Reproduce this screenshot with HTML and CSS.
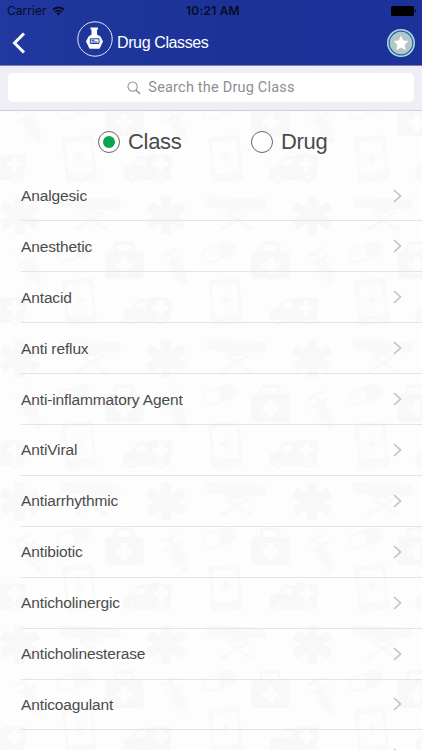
FILE: index.html
```
<!DOCTYPE html>
<html lang="en">
<head>
<meta charset="utf-8">
<title>Drug Classes</title>
<link rel="stylesheet" href="styles.css">
</head>
<body>
<div class="screen">
  <header class="header">
    <div class="status">
      <div class="carrier"><span>Carrier</span>
        <svg width="13" height="10" viewBox="0 0 14 10"><g fill="none" stroke="#070b25" stroke-width="1.9"><path d="M1 3.6Q7-1.2 13 3.6"/><path d="M3.3 6Q7 3 10.7 6"/></g><path d="M4.8 7.4Q7 5.8 9.2 7.4L7 9.8Z" fill="#070b25"/></svg>
      </div>
      <div class="time">10:21 AM</div>
      <svg class="battery" width="26" height="10" viewBox="0 0 26 10"><rect width="23" height="10" rx="1.6"/><path d="M24 3q2 2 0 4z"/></svg>
    </div>
    <div class="nav">
      <svg class="back" width="14" height="22" viewBox="0 0 14 22"><path d="M12 1.5L2.5 11L12 20.5" fill="none" stroke="#fff" stroke-width="3"/></svg>
      <svg class="logo" width="36" height="36" viewBox="0 0 36 36"><circle cx="18" cy="18" r="17.2" fill="none" stroke="#e4e8f8" stroke-width="1"/><path d="M13.5 6.500h7.500v2h-1v5l3.500 2l2.500 5l-3.500 7.200h-10l-3.500-7.200l2.500-5l3-2V8.500h-1z" fill="#fff"/><path d="M13.300 17.800h8.700v4.700h-8.700zM14.500 19.300h3M14.500 21h6" fill="none" stroke="#2038a0" stroke-width="1"/></svg>
      <h1>Drug Classes</h1>
      <svg class="star" width="28" height="28" viewBox="0 0 28 28"><circle cx="14" cy="14" r="13.2" fill="#2f6297" stroke="#a9d8e1" stroke-width="1.6"/><circle cx="14" cy="14" r="10.8" fill="#b9c5c5" stroke="#a5d3dc" stroke-width="1"/><path d="M14 7.400l2.100 4.300l4.700.7l-3.400 3.300l.8 4.700l-4.200-2.200l-4.200 2.200l.8-4.700l-3.400-3.300l4.700-.7z" fill="#fff" stroke="#fff" stroke-width=".7"/></svg>
    </div>
  </header>
  <div class="searchbar">
    <div class="field">
      <svg width="14" height="14" viewBox="0 0 15 15" fill="none" stroke="#8e8e93"><circle cx="6" cy="6" r="5" stroke-width="1.1"/><path d="M9.6 9.6L14 14" stroke-width="1.5"/></svg>
      <span>Search the Drug Class</span>
    </div>
  </div>
  <main class="content">
    <svg class="wallpaper" width="422" height="640" viewBox="0 110 422 640">
      <defs>
        <pattern id="medical" patternUnits="userSpaceOnUse" x="47" y="190" width="146.2" height="143">
          <g transform="translate(-47 -190)" fill="#f9f9f9">
            <path d="M60.500 196L120 199v10l-23 1v3h-13l-3-4l-20-2z"/>
            <path d="M80 212L104 229M103 212L77 229" stroke="#f9f9f9" stroke-width="3"/><circle cx="77" cy="228" r="2.500"/><circle cx="105" cy="228" r="2.500"/>
            <path d="M166 196.500v38M148 206l36 19M184 206l-36 19" stroke="#f8f8f8" stroke-width="10"/>
            <g transform="rotate(-18 73 252)"><rect x="56.500" y="245" width="33" height="14" rx="7" fill="none" stroke="#f9f9f9" stroke-width="2"/><path d="M73 244h9a8 8 0 0 1 0 16h-9z"/></g>
            <path d="M115 252v-5q0-4 4-4h10q4 0 4 4v5" fill="none" stroke="#f8f8f8" stroke-width="3"/>
            <rect x="105" y="251" width="38.500" height="28" rx="4" fill="#f8f8f8"/><path d="M121.500 257h6v5.500h5.500v6h-5.500v5.500h-6v-5.500h-5.500v-6h5.500z" fill="#fdfdfd"/>
            <g transform="translate(177 268) rotate(-27)"><path d="M-6-9H6V12H-6zM-3 13h6v6h-6zM-1-16h3v6h-3zM-8-19H9v3H-8zM-10-10H10v3H-10z"/></g>
            <g transform="rotate(-5 79 302)"><path fill-rule="evenodd" d="M67 279h25q3 0 3 3v40q0 3-3 3H67q-3 0-3-3v-40q0-3 3-3zM67.500 284v32h24v-32z"/><path d="M78 295h3v4h4v3h-4v4h-3v-4h-4v-3h4z"/><circle cx="79.500" cy="320.500" r="1.600" fill="#fdfdfd"/></g>
            <path d="M123 321l1-11l8-2l6-9h12v-2l22 1l-2 25h-46z" fill="#f8f8f8"/><path d="M134 308l5-6h7v7z" fill="#fdfdfd"/><circle cx="132" cy="321" r="5" fill="#f8f8f8" stroke="#fdfdfd"/><circle cx="161" cy="321" r="5" fill="#f8f8f8" stroke="#fdfdfd"/><circle cx="132" cy="321" r="2.200" fill="#fdfdfd"/><circle cx="161" cy="321" r="2.200" fill="#fdfdfd"/><path d="M158 300h5v5h5v5h-5v5h-5v-5h-5v-5h5z" fill="#fdfdfd"/>
          </g>
        </pattern>
      </defs>
      <rect y="110" width="422" height="640" fill="url(#medical)"/>
    </svg>
    <div class="filters">
      <div class="choice"><span class="radio on"></span><span>Class</span></div>
      <div class="choice"><span class="radio"></span><span>Drug</span></div>
    </div>
    <ul class="list">
      <li><span>Analgesic</span><svg class="chev" viewBox="0 0 9 14"><path d="M1 1l6.500 6L1 13"/></svg></li>
      <li><span>Anesthetic</span><svg class="chev" viewBox="0 0 9 14"><path d="M1 1l6.500 6L1 13"/></svg></li>
      <li><span>Antacid</span><svg class="chev" viewBox="0 0 9 14"><path d="M1 1l6.500 6L1 13"/></svg></li>
      <li><span>Anti reflux</span><svg class="chev" viewBox="0 0 9 14"><path d="M1 1l6.500 6L1 13"/></svg></li>
      <li><span>Anti-inflammatory Agent</span><svg class="chev" viewBox="0 0 9 14"><path d="M1 1l6.500 6L1 13"/></svg></li>
      <li><span>AntiViral</span><svg class="chev" viewBox="0 0 9 14"><path d="M1 1l6.500 6L1 13"/></svg></li>
      <li><span>Antiarrhythmic</span><svg class="chev" viewBox="0 0 9 14"><path d="M1 1l6.500 6L1 13"/></svg></li>
      <li><span>Antibiotic</span><svg class="chev" viewBox="0 0 9 14"><path d="M1 1l6.500 6L1 13"/></svg></li>
      <li><span>Anticholinergic</span><svg class="chev" viewBox="0 0 9 14"><path d="M1 1l6.500 6L1 13"/></svg></li>
      <li><span>Anticholinesterase</span><svg class="chev" viewBox="0 0 9 14"><path d="M1 1l6.500 6L1 13"/></svg></li>
      <li><span>Anticoagulant</span><svg class="chev" viewBox="0 0 9 14"><path d="M1 1l6.500 6L1 13"/></svg></li>
      <li><span>Anticonvulsant</span><svg class="chev" viewBox="0 0 9 14"><path d="M1 1l6.500 6L1 13"/></svg></li>
    </ul>
  </main>
</div>
</body>
</html>
```
FILE: styles.css
```
* { box-sizing: border-box; }
body { margin: 0; font-family: "Liberation Sans", Arial, sans-serif; }
svg { display: block; flex: none; }
.screen { width: 422px; height: 750px; overflow: hidden; display: flex; flex-direction: column; background: #fdfdfd; }
.header { height: 66px; flex: none; background: linear-gradient(90deg, #20389f, #1c3298 55%, #1d319b); border-bottom: 1px solid #777fb4; }
.status { height: 22px; padding: 0 6px 0 7px; display: grid; grid-template-columns: 1fr auto 1fr; align-items: center; color: #070b25; font: 12px/22px Inter, sans-serif; }
.carrier { display: flex; align-items: center; gap: 5px; letter-spacing: .05px; }
.time { font-weight: 600; letter-spacing: .2px; margin-left: 3px; }
.battery { justify-self: end; margin-right: -1px; fill: #000; }
.nav { height: 42px; padding: 0 7px 0 12px; display: flex; align-items: center; }
.back { margin-right: 51px; }
.logo { margin-top: -8px; }
h1 { margin: 0 auto 0 4px; font-weight: 400; font-size: 16px; line-height: 20px; letter-spacing: -.38px; color: #fff; }
.searchbar { height: 45px; flex: none; padding: 7px 8px 0 8px; background: #efeef6; border-bottom: 1px solid #d0cfd7; }
.field { height: 29px; border-radius: 5px; background: #fff; display: flex; align-items: center; justify-content: center; gap: 7px; color: #8e8e93; font: 14.500px/29px Roboto, sans-serif; letter-spacing: .2px; }
.content { position: relative; flex: 1; min-height: 0; overflow: hidden; }
.wallpaper { position: absolute; left: 0; top: -1px; }
.filters { position: relative; height: 59.600px; padding: 3px 0 0 98px; display: flex; align-items: center; color: #4b4b4b; font-size: 22px; line-height: 26px; letter-spacing: -.3px; }
.choice { display: flex; align-items: center; gap: 8px; width: 153px; }
.radio { width: 22px; height: 22px; border: 1px solid #666; border-radius: 50%; display: grid; place-items: center; background: #fff; }
.on::after { content: ""; width: 12px; height: 12px; border-radius: 50%; background: #06a650; }
.list { position: relative; list-style: none; margin: 0 0 0 21px; padding: 0; }
.list li { height: 50.900px; padding-right: 20px; display: flex; align-items: center; justify-content: space-between; border-bottom: 1px solid #e4e4e6; color: #4b4b4b; font-size: 15.500px; line-height: 20px; letter-spacing: -.13px; }
.list span { padding-top: 1px; }
.chev { width: 9px; height: 14px; fill: none; stroke: #c2c2c8; stroke-width: 1.700; }
```
